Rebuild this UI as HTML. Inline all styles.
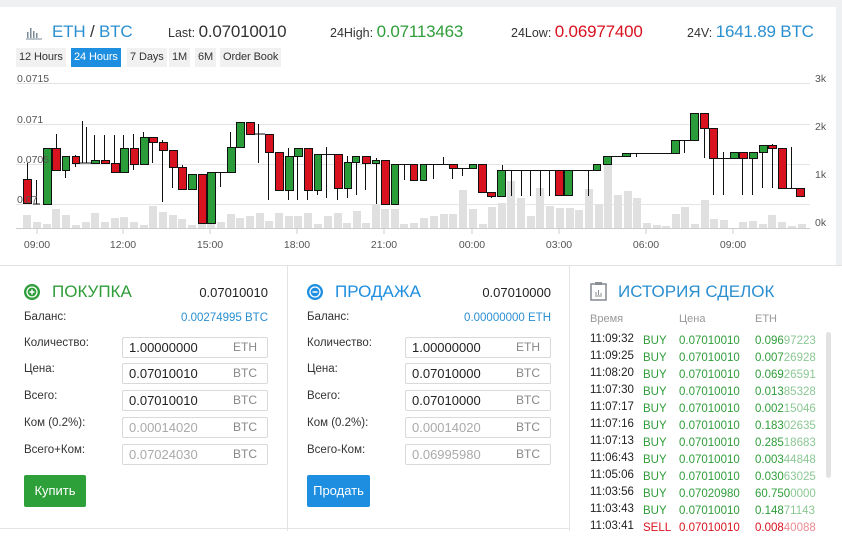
<!DOCTYPE html>
<html><head><meta charset="utf-8"><style>
*{margin:0;padding:0;box-sizing:border-box}
body{width:842px;height:531px;overflow:hidden;background:#fff;font-family:"Liberation Sans","DejaVu Sans",sans-serif;color:#333;position:relative}
.abs{position:absolute;white-space:nowrap}
.top{position:absolute;left:0;top:0;width:842px;height:7px;background:#eef0f2}
.rb{position:absolute;left:836px;top:0;width:6px;height:265px;background:#eef0f2}
.hd{font-size:17px;letter-spacing:-0.2px}
.hd span{font-size:12.5px;letter-spacing:0}
.tab{position:absolute;top:48px;height:19px;line-height:19px;font-size:11px;background:#f1f1f1;color:#333;padding:0 3px;letter-spacing:-0.1px}
.lbl{font-size:11.5px;color:#333}
.inp{position:absolute;width:146px;height:21px;border:1px solid #d9d9d9;border-radius:2px;font-size:13px;line-height:19px;padding-left:6px;color:#222}
.inp span{position:absolute;right:10px;color:#888;font-size:12px}
.inp.g{color:#aaa}
.hrow{position:absolute;left:590px;font-size:11.5px;height:17px}
</style></head><body>
<div class="top"></div><div class="rb"></div>
<!-- header -->
<svg class="abs" style="left:26px;top:26px" width="16" height="14"><g fill="#7a8a99"><rect x="1" y="6" width="1.5" height="6"/><rect x="4" y="2" width="1.5" height="10"/><rect x="7" y="5" width="1.5" height="7"/><rect x="10" y="7" width="1.5" height="5"/><rect x="0" y="12.5" width="16" height="1"/></g></svg>
<div class="abs hd" style="left:52px;top:22px;color:#2a8fd0">ETH <b style="font-weight:normal;color:#333">/</b> BTC</div>
<div class="abs hd" style="left:168px;top:22px"><span>Last: </span>0.07010010</div>
<div class="abs hd" style="left:330px;top:22px;color:#2f9d3a"><span style="color:#333">24High: </span>0.07113463</div>
<div class="abs hd" style="left:511px;top:22px;color:#d9121f"><span style="color:#333">24Low: </span>0.06977400</div>
<div class="abs hd" style="left:687px;top:22px;color:#2a8fd0"><span style="color:#333">24V: </span>1641.89 BTC</div>
<div class="tab" style="left:16px">12 Hours</div>
<div class="tab" style="left:71px;background:#1e8fe0;color:#fff">24 Hours</div>
<div class="tab" style="left:127px">7 Days</div>
<div class="tab" style="left:169px">1M</div>
<div class="tab" style="left:195px">6M</div>
<div class="tab" style="left:220px">Order Book</div>
<!-- chart -->
<svg class="abs" style="left:0;top:0" width="842" height="260" font-family="Liberation Sans, sans-serif" font-size="10.5" fill="#555">
<g stroke="#e4e4e4" stroke-width="1"><line x1="16" y1="83.5" x2="810" y2="83.5"/><line x1="16" y1="124.5" x2="810" y2="124.5"/><line x1="16" y1="164.5" x2="810" y2="164.5"/><line x1="16" y1="204.5" x2="810" y2="204.5"/></g>
<g fill="#e0e0e0">
<rect x="23" y="215" width="8" height="13"/><rect x="33" y="222" width="8" height="6"/><rect x="43" y="224" width="8" height="4"/><rect x="52" y="209" width="8" height="19"/><rect x="62" y="215" width="8" height="13"/><rect x="72" y="225" width="8" height="3"/><rect x="82" y="222" width="8" height="6"/><rect x="91" y="213" width="8" height="15"/><rect x="101" y="222" width="8" height="6"/><rect x="111" y="218" width="8" height="10"/><rect x="120" y="217" width="8" height="11"/><rect x="130" y="222" width="8" height="6"/><rect x="140" y="225" width="8" height="3"/><rect x="149" y="206" width="8" height="22"/><rect x="159" y="212" width="8" height="16"/><rect x="169" y="215" width="8" height="13"/><rect x="178" y="219" width="8" height="9"/><rect x="188" y="225" width="8" height="3"/><rect x="198" y="220" width="8" height="8"/><rect x="207" y="224" width="8" height="4"/><rect x="217" y="222" width="8" height="6"/><rect x="227" y="214" width="8" height="14"/><rect x="236" y="218" width="8" height="10"/><rect x="246" y="216" width="8" height="12"/><rect x="256" y="213" width="8" height="15"/><rect x="265" y="221" width="8" height="7"/><rect x="275" y="213" width="8" height="15"/><rect x="285" y="216" width="8" height="12"/><rect x="294" y="216" width="8" height="12"/><rect x="304" y="213" width="8" height="15"/><rect x="314" y="224" width="8" height="4"/><rect x="324" y="216" width="8" height="12"/><rect x="334" y="213" width="8" height="15"/><rect x="343" y="223" width="8" height="5"/><rect x="353" y="211" width="8" height="17"/><rect x="362" y="223" width="8" height="5"/><rect x="372" y="205" width="8" height="23"/><rect x="381" y="209" width="8" height="19"/><rect x="391" y="209" width="8" height="19"/><rect x="400" y="224" width="8" height="4"/><rect x="410" y="223" width="8" height="5"/><rect x="420" y="218" width="8" height="10"/><rect x="430" y="216" width="8" height="12"/><rect x="440" y="214" width="8" height="14"/><rect x="449" y="214" width="8" height="14"/><rect x="459" y="190" width="8" height="38"/><rect x="469" y="209" width="8" height="19"/><rect x="479" y="224" width="8" height="4"/><rect x="488" y="207" width="8" height="21"/><rect x="498" y="203" width="8" height="25"/><rect x="507" y="181" width="8" height="47"/><rect x="517" y="198" width="8" height="30"/><rect x="527" y="216" width="8" height="12"/><rect x="536" y="188" width="8" height="40"/><rect x="546" y="206" width="8" height="22"/><rect x="556" y="208" width="8" height="20"/><rect x="566" y="208" width="8" height="20"/><rect x="575" y="210" width="8" height="18"/><rect x="585" y="189" width="8" height="39"/><rect x="595" y="204" width="8" height="24"/><rect x="604" y="165" width="8" height="63"/><rect x="614" y="195" width="8" height="33"/><rect x="624" y="191" width="8" height="37"/><rect x="633" y="198" width="8" height="30"/><rect x="643" y="223" width="8" height="5"/><rect x="653" y="225" width="8" height="3"/><rect x="662" y="226" width="8" height="2"/><rect x="672" y="214" width="8" height="14"/><rect x="681" y="207" width="8" height="21"/><rect x="691" y="224" width="8" height="4"/><rect x="701" y="200" width="8" height="28"/><rect x="710" y="219" width="8" height="9"/><rect x="720" y="220" width="8" height="8"/><rect x="739" y="222" width="8" height="6"/><rect x="749" y="221" width="8" height="7"/><rect x="759" y="224" width="8" height="4"/><rect x="768" y="215" width="8" height="13"/><rect x="778" y="222" width="8" height="6"/><rect x="788" y="226" width="8" height="2"/><rect x="798" y="224" width="8" height="4"/>
</g>
<line x1="16" y1="228.5" x2="810" y2="228.5" stroke="#ccc"/>
<g stroke="#ccc"><line x1="37" y1="229" x2="37" y2="234"/><line x1="123" y1="229" x2="123" y2="234"/><line x1="210" y1="229" x2="210" y2="234"/><line x1="297" y1="229" x2="297" y2="234"/><line x1="384" y1="229" x2="384" y2="234"/><line x1="472" y1="229" x2="472" y2="234"/><line x1="559" y1="229" x2="559" y2="234"/><line x1="646" y1="229" x2="646" y2="234"/><line x1="733" y1="229" x2="733" y2="234"/></g>
<g stroke="#111" stroke-width="1">
<line x1="27.5" y1="163" x2="27.5" y2="204"/><line x1="36.5" y1="180" x2="36.5" y2="204"/><line x1="56.5" y1="134" x2="56.5" y2="170"/><line x1="65.5" y1="156" x2="65.5" y2="178"/><line x1="75.5" y1="155" x2="75.5" y2="167"/><line x1="82.5" y1="121" x2="82.5" y2="163"/><line x1="86.5" y1="127" x2="86.5" y2="163"/><line x1="94.5" y1="135" x2="94.5" y2="163"/><line x1="104.5" y1="135" x2="104.5" y2="163"/><line x1="114.5" y1="135" x2="114.5" y2="172"/><line x1="123.5" y1="135" x2="123.5" y2="172"/><line x1="133.5" y1="134" x2="133.5" y2="170"/><line x1="143.5" y1="132" x2="143.5" y2="164"/><line x1="152.5" y1="137" x2="152.5" y2="163"/><line x1="162.5" y1="140" x2="162.5" y2="202"/><line x1="172.5" y1="150" x2="172.5" y2="188"/><line x1="182.5" y1="165" x2="182.5" y2="189"/><line x1="220.5" y1="172" x2="220.5" y2="187"/><line x1="230.5" y1="132" x2="230.5" y2="172"/><line x1="258.5" y1="124" x2="258.5" y2="163"/><line x1="268.5" y1="134" x2="268.5" y2="200"/><line x1="288.5" y1="148" x2="288.5" y2="200"/><line x1="297.5" y1="148" x2="297.5" y2="200"/><line x1="307.5" y1="148" x2="307.5" y2="200"/><line x1="317.5" y1="154" x2="317.5" y2="195"/><line x1="326.5" y1="147" x2="326.5" y2="198"/><line x1="337.5" y1="154" x2="337.5" y2="200"/><line x1="347.5" y1="156" x2="347.5" y2="198"/><line x1="356.5" y1="156" x2="356.5" y2="195"/><line x1="365.5" y1="156" x2="365.5" y2="190"/><line x1="376.5" y1="158" x2="376.5" y2="204"/><line x1="404.5" y1="164" x2="404.5" y2="180"/><line x1="433.5" y1="164" x2="433.5" y2="179"/><line x1="443.5" y1="157" x2="443.5" y2="164"/><line x1="452.5" y1="164" x2="452.5" y2="179"/><line x1="462.5" y1="168" x2="462.5" y2="176"/><line x1="491.5" y1="192" x2="491.5" y2="198"/><line x1="502.5" y1="165" x2="502.5" y2="196"/><line x1="511.5" y1="170" x2="511.5" y2="196"/><line x1="521.5" y1="170" x2="521.5" y2="196"/><line x1="530.5" y1="170" x2="530.5" y2="196"/><line x1="540.5" y1="170" x2="540.5" y2="196"/><line x1="549.5" y1="170" x2="549.5" y2="196"/><line x1="588.5" y1="170" x2="588.5" y2="196"/><line x1="636.5" y1="153" x2="636.5" y2="157"/><line x1="684.5" y1="140" x2="684.5" y2="153"/><line x1="704.5" y1="128" x2="704.5" y2="158"/><line x1="713.5" y1="128" x2="713.5" y2="195"/><line x1="723.5" y1="152" x2="723.5" y2="195"/><line x1="742.5" y1="152" x2="742.5" y2="195"/><line x1="752.5" y1="152" x2="752.5" y2="195"/><line x1="762.5" y1="145" x2="762.5" y2="188"/><line x1="772.5" y1="144" x2="772.5" y2="188"/><line x1="791.5" y1="147" x2="791.5" y2="188"/>
<line x1="33" y1="204" x2="40" y2="204"/><line x1="79" y1="163" x2="91" y2="163"/><line x1="214" y1="172.5" x2="227" y2="172.5"/><line x1="253" y1="134" x2="265" y2="134"/><line x1="321" y1="154.5" x2="334" y2="154.5"/><line x1="398" y1="164.5" x2="418" y2="164.5"/><line x1="426" y1="164.5" x2="449" y2="164.5"/><line x1="457" y1="168.5" x2="469" y2="168.5"/><line x1="505" y1="170.5" x2="563" y2="170.5"/><line x1="572" y1="170.5" x2="593" y2="170.5"/><line x1="611" y1="156.5" x2="622" y2="156.5"/><line x1="630" y1="153.5" x2="671" y2="153.5"/><line x1="679" y1="140.5" x2="690" y2="140.5"/><line x1="717" y1="158.5" x2="730" y2="158.5"/><line x1="786" y1="188.5" x2="796" y2="188.5"/>
</g>
<g stroke="#111" stroke-width="1">
<g fill="#d9121f">
<rect x="23.5" y="179.5" width="8" height="24"/><rect x="52.5" y="148.5" width="8" height="22"/><rect x="72.5" y="156.5" width="7" height="7"/><rect x="101.5" y="160.5" width="8" height="3"/><rect x="111.5" y="163.5" width="8" height="9"/><rect x="130.5" y="148.5" width="8" height="16"/><rect x="149.5" y="137.5" width="8" height="5"/><rect x="159.5" y="142.5" width="8" height="8"/><rect x="169.5" y="150.5" width="8" height="17"/><rect x="178.5" y="167.5" width="8" height="22"/><rect x="198.5" y="174.5" width="8" height="49"/><rect x="246.5" y="122.5" width="8" height="12"/><rect x="265.5" y="134.5" width="8" height="18"/><rect x="275.5" y="152.5" width="8" height="38"/><rect x="304.5" y="148.5" width="8" height="42"/><rect x="334.5" y="154.5" width="8" height="34"/><rect x="362.5" y="156.5" width="8" height="7"/><rect x="381.5" y="160.5" width="8" height="44"/><rect x="410.5" y="164.5" width="7" height="16"/><rect x="449.5" y="164.5" width="8" height="4"/><rect x="478.5" y="164.5" width="8" height="28"/><rect x="487.5" y="192.5" width="8" height="4"/><rect x="555.5" y="170.5" width="8" height="25"/><rect x="700.5" y="113.5" width="8" height="15"/><rect x="709.5" y="128.5" width="8" height="30"/><rect x="739.5" y="152.5" width="8" height="6"/><rect x="768.5" y="145.5" width="8" height="3"/><rect x="778.5" y="148.5" width="8" height="40"/><rect x="796.5" y="188.5" width="8" height="8"/>
</g>
<g fill="#2a9d3a">
<rect x="43.5" y="148.5" width="8" height="56"/><rect x="62.5" y="156.5" width="7" height="14"/><rect x="91.5" y="160.5" width="8" height="3"/><rect x="120.5" y="148.5" width="8" height="24"/><rect x="140.5" y="137.5" width="8" height="27"/><rect x="188.5" y="174.5" width="8" height="15"/><rect x="207.5" y="172.5" width="8" height="51"/><rect x="227.5" y="147.5" width="8" height="25"/><rect x="236.5" y="122.5" width="8" height="25"/><rect x="285.5" y="156.5" width="8" height="34"/><rect x="294.5" y="148.5" width="8" height="8"/><rect x="314.5" y="154.5" width="7" height="36"/><rect x="344.5" y="162.5" width="7" height="26"/><rect x="352.5" y="156.5" width="7" height="6"/><rect x="372.5" y="160.5" width="7" height="3"/><rect x="391.5" y="164.5" width="7" height="40"/><rect x="420.5" y="164.5" width="6" height="16"/><rect x="469.5" y="164.5" width="7" height="4"/><rect x="497.5" y="170.5" width="8" height="26"/><rect x="564.5" y="170.5" width="8" height="25"/><rect x="593.5" y="164.5" width="7" height="6"/><rect x="603.5" y="156.5" width="8" height="8"/><rect x="622.5" y="153.5" width="8" height="3"/><rect x="671.5" y="140.5" width="8" height="13"/><rect x="690.5" y="113.5" width="8" height="27"/><rect x="730.5" y="152.5" width="8" height="6"/><rect x="749.5" y="152.5" width="8" height="6"/><rect x="759.5" y="145.5" width="8" height="7"/>
</g></g>
<text x="17" y="82">0.0715</text><text x="17" y="123">0.071</text><text x="17" y="163">0.0705</text><text x="17" y="203">0.07</text>
<text x="815" y="82">3k</text><text x="815" y="130">2k</text><text x="815" y="178">1k</text><text x="815" y="226">0k</text>
<g text-anchor="middle"><text x="37" y="248">09:00</text><text x="123" y="248">12:00</text><text x="210" y="248">15:00</text><text x="297" y="248">18:00</text><text x="384" y="248">21:00</text><text x="472" y="248">00:00</text><text x="559" y="248">03:00</text><text x="646" y="248">06:00</text><text x="733" y="248">09:00</text></g>
</svg>
<!-- dividers -->
<div class="abs" style="left:0;top:265px;width:842px;height:1px;background:#e3e3e3"></div>
<div class="abs" style="left:287px;top:266px;width:1px;height:265px;background:#e3e3e3"></div>
<div class="abs" style="left:569px;top:266px;width:1px;height:265px;background:#e3e3e3"></div>
<div class="abs" style="left:0;top:528px;width:570px;height:1px;background:#e3e3e3"></div>
<!-- buy -->
<svg class="abs" style="left:23px;top:283px" width="18" height="18"><circle cx="9" cy="9" r="8" fill="#2f9d3a"/><circle cx="9" cy="9" r="5" fill="none" stroke="#fff" stroke-width="1.3"/><path d="M9 6.5v5M6.5 9h5" stroke="#fff" stroke-width="1.5"/></svg>
<div class="abs" style="left:52px;top:282px;font-size:17px;color:#2f9d3a">ПОКУПКА</div>
<div class="abs" style="right:574px;top:285px;font-size:13px;color:#222">0.07010010</div>
<div class="abs lbl" style="left:24px;top:311px">Баланс:</div>
<div class="abs" style="right:574px;top:312px;font-size:11.5px;color:#2a8fd0">0.00274995 BTC</div>
<div class="abs lbl" style="left:24px;top:337px">Количество:</div>
<div class="abs lbl" style="left:24px;top:363px">Цена:</div>
<div class="abs lbl" style="left:24px;top:390px">Всего:</div>
<div class="abs lbl" style="left:24px;top:417px">Ком (0.2%):</div>
<div class="abs lbl" style="left:24px;top:444px">Всего+Ком:</div>
<div class="inp" style="left:122px;top:337px">1.00000000<span>ETH</span></div>
<div class="inp" style="left:122px;top:363px">0.07010010<span>BTC</span></div>
<div class="inp" style="left:122px;top:390px">0.07010010<span>BTC</span></div>
<div class="inp g" style="left:122px;top:417px">0.00014020<span>BTC</span></div>
<div class="inp g" style="left:122px;top:444px">0.07024030<span>BTC</span></div>
<div class="abs" style="left:24px;top:475px;width:62px;height:32px;background:#2ea03a;border-radius:2px;color:#fff;font-size:13px;line-height:32px;text-align:center">Купить</div>
<!-- sell -->
<svg class="abs" style="left:306px;top:283px" width="18" height="18"><circle cx="9" cy="9" r="8" fill="#1e8fe0"/><circle cx="9" cy="9" r="5" fill="none" stroke="#fff" stroke-width="1.3"/><path d="M6.5 9h5" stroke="#fff" stroke-width="1.5"/></svg>
<div class="abs" style="left:335px;top:282px;font-size:17px;color:#1e8fe0">ПРОДАЖА</div>
<div class="abs" style="right:291px;top:285px;font-size:13px;color:#222">0.07010000</div>
<div class="abs lbl" style="left:307px;top:311px">Баланс:</div>
<div class="abs" style="right:291px;top:312px;font-size:11.5px;color:#2a8fd0">0.00000000 ETH</div>
<div class="abs lbl" style="left:307px;top:337px">Количество:</div>
<div class="abs lbl" style="left:307px;top:363px">Цена:</div>
<div class="abs lbl" style="left:307px;top:390px">Всего:</div>
<div class="abs lbl" style="left:307px;top:417px">Ком (0.2%):</div>
<div class="abs lbl" style="left:307px;top:444px">Всего-Ком:</div>
<div class="inp" style="left:405px;top:337px">1.00000000<span>ETH</span></div>
<div class="inp" style="left:405px;top:363px">0.07010000<span>BTC</span></div>
<div class="inp" style="left:405px;top:390px">0.07010000<span>BTC</span></div>
<div class="inp g" style="left:405px;top:417px">0.00014020<span>BTC</span></div>
<div class="inp g" style="left:405px;top:444px">0.06995980<span>BTC</span></div>
<div class="abs" style="left:307px;top:475px;width:63px;height:32px;background:#1e8fe0;border-radius:2px;color:#fff;font-size:13px;line-height:32px;text-align:center">Продать</div>
<!-- history -->
<svg class="abs" style="left:590px;top:281px" width="17" height="20"><rect x="1" y="3" width="15" height="16" fill="none" stroke="#8a8f94" stroke-width="1.6"/><rect x="5" y="1" width="7" height="3" fill="#8a8f94"/><path d="M5 15h7M6 14v-3M8.5 14v-5M11 14v-2" stroke="#8a8f94" stroke-width="1"/></svg>
<div class="abs" style="left:618px;top:282px;font-size:17px;color:#2a8fd0">ИСТОРИЯ СДЕЛОК</div>
<div class="abs" style="left:590px;top:313px;font-size:11px;color:#999">Время</div>
<div class="abs" style="left:679px;top:313px;font-size:11px;color:#999">Цена</div>
<div class="abs" style="left:755px;top:313px;font-size:11px;color:#999">ETH</div>
<div class="abs" style="left:826px;top:332px;width:5px;height:146px;background:#e2e2e2;border-radius:3px"></div>
<div class="abs" style="left:0;top:0;font-size:11.5px;color:#222">
<div class="hrow" style="top:333px">11:09:32</div><div class="hrow" style="top:350px">11:09:25</div><div class="hrow" style="top:367px">11:08:20</div><div class="hrow" style="top:384px">11:07:30</div><div class="hrow" style="top:401px">11:07:17</div><div class="hrow" style="top:418px">11:07:16</div><div class="hrow" style="top:435px">11:07:13</div><div class="hrow" style="top:452px">11:06:43</div><div class="hrow" style="top:469px">11:05:06</div><div class="hrow" style="top:486px">11:03:56</div><div class="hrow" style="top:503px">11:03:43</div><div class="hrow" style="top:520px">11:03:41</div>
</div>
<div class="abs" style="left:643px;top:333px;font-size:11.5px;color:#2f9d3a;line-height:17px">BUY<br>BUY<br>BUY<br>BUY<br>BUY<br>BUY<br>BUY<br>BUY<br>BUY<br>BUY<br>BUY<br><span style="color:#d9121f">SELL</span></div>
<div class="abs" style="left:679px;top:333px;font-size:11.5px;color:#2f9d3a;line-height:17px">0.07010010<br>0.07010010<br>0.07010010<br>0.07010010<br>0.07010010<br>0.07010010<br>0.07010010<br>0.07010010<br>0.07010010<br>0.07020980<br>0.07010010<br><span style="color:#d9121f">0.07010010</span></div>
<div class="abs" style="left:755px;top:333px;font-size:11.5px;color:#2f9d3a;line-height:17px">0.096<span style="color:#8cc894">97223</span><br>0.007<span style="color:#8cc894">26928</span><br>0.069<span style="color:#8cc894">26591</span><br>0.013<span style="color:#8cc894">85328</span><br>0.002<span style="color:#8cc894">15046</span><br>0.183<span style="color:#8cc894">02635</span><br>0.285<span style="color:#8cc894">18683</span><br>0.003<span style="color:#8cc894">44848</span><br>0.030<span style="color:#8cc894">63025</span><br>60.750<span style="color:#8cc894">0000</span><br>0.148<span style="color:#8cc894">71143</span><br><span style="color:#d9121f">0.008</span><span style="color:#ec8a90">40088</span></div>
</body></html>
